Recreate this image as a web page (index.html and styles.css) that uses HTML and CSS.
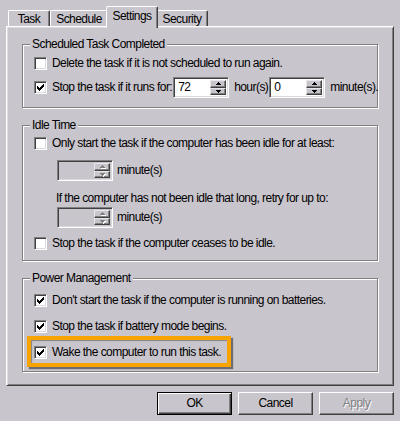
FILE: index.html
```html
<!DOCTYPE html>
<html>
<head>
<meta charset="utf-8">
<title>Task Settings</title>
<link rel="stylesheet" href="styles.css">
</head>
<body>
<div class="dlg">
  <div class="tabs">
    <div class="tab t-task">Task</div>
    <div class="tab t-sched">Schedule</div>
    <div class="tab t-set sel">Settings</div>
    <div class="tab t-sec">Security</div>
  </div>
  <div class="panel">
    <div class="grp g1">
      <span class="legend">Scheduled Task Completed</span>
      <div class="row r17 first1"><span class="cb"></span><span class="lbl">Delete the task if it is not scheduled to run again.</span></div>
      <div class="row r21 g1r2">
        <span class="cb"><svg class="chk" width="7" height="7" viewBox="0 0 7 7"><path d="M0 2h1v3H0zM1 3h1v3H1zM2 4h1v3H2zM3 3h1v3H3zM4 2h1v3H4zM5 1h1v3H5zM6 0h1v3H6z"/></svg></span>
        <span class="lbl">Stop the task if it runs for:</span>
        <span class="spin s-hours"><span class="val">72</span><span class="sbs"><span class="sb"><svg width="5" height="3" viewBox="0 0 5 3"><path d="M2 0h1v1h1v1h1v1H0V2h1V1h1z"/></svg></span><span class="sb"><svg width="5" height="3" viewBox="0 0 5 3"><path d="M0 0h5v1H4v1H3v1H2V2H1V1H0z"/></svg></span></span></span>
        <span class="unit u-hour">hour(s)</span>
        <span class="spin s-min"><span class="val">0</span><span class="sbs"><span class="sb"><svg width="5" height="3" viewBox="0 0 5 3"><path d="M2 0h1v1h1v1h1v1H0V2h1V1h1z"/></svg></span><span class="sb"><svg width="5" height="3" viewBox="0 0 5 3"><path d="M0 0h5v1H4v1H3v1H2V2H1V1H0z"/></svg></span></span></span>
        <span class="unit u-min">minute(s).</span>
      </div>
    </div>

    <div class="grp g2">
      <span class="legend">Idle Time</span>
      <div class="row r17 first2"><span class="cb"></span><span class="lbl">Only start the task if the computer has been idle for at least:</span></div>
      <div class="row r21 ind sp1">
        <span class="spin dis"><span class="val"></span><span class="sbs"><span class="sb"><svg width="5" height="3" viewBox="0 0 5 3"><path d="M2 0h1v1h1v1h1v1H0V2h1V1h1z"/></svg></span><span class="sb"><svg width="5" height="3" viewBox="0 0 5 3"><path d="M0 0h5v1H4v1H3v1H2V2H1V1H0z"/></svg></span></span></span>
        <span class="unit u-dis">minute(s)</span>
      </div>
      <div class="row r17 ind2 txt">If the computer has not been idle that long, retry for up to:</div>
      <div class="row r21 ind sp2">
        <span class="spin dis"><span class="val"></span><span class="sbs"><span class="sb"><svg width="5" height="3" viewBox="0 0 5 3"><path d="M2 0h1v1h1v1h1v1H0V2h1V1h1z"/></svg></span><span class="sb"><svg width="5" height="3" viewBox="0 0 5 3"><path d="M0 0h5v1H4v1H3v1H2V2H1V1H0z"/></svg></span></span></span>
        <span class="unit u-dis">minute(s)</span>
      </div>
      <div class="row r17 cb4"><span class="cb"></span><span class="lbl">Stop the task if the computer ceases to be idle.</span></div>
    </div>

    <div class="grp g3">
      <span class="legend">Power Management</span>
      <div class="row r17 first3"><span class="cb"><svg class="chk" width="7" height="7" viewBox="0 0 7 7"><path d="M0 2h1v3H0zM1 3h1v3H1zM2 4h1v3H2zM3 3h1v3H3zM4 2h1v3H4zM5 1h1v3H5zM6 0h1v3H6z"/></svg></span><span class="lbl">Don't start the task if the computer is running on batteries.</span></div>
      <div class="row r17 next3"><span class="cb"><svg class="chk" width="7" height="7" viewBox="0 0 7 7"><path d="M0 2h1v3H0zM1 3h1v3H1zM2 4h1v3H2zM3 3h1v3H3zM4 2h1v3H4zM5 1h1v3H5zM6 0h1v3H6z"/></svg></span><span class="lbl">Stop the task if battery mode begins.</span></div>
      <div class="row r17 next3"><span class="cb"><svg class="chk" width="7" height="7" viewBox="0 0 7 7"><path d="M0 2h1v3H0zM1 3h1v3H1zM2 4h1v3H2zM3 3h1v3H3zM4 2h1v3H4zM5 1h1v3H5zM6 0h1v3H6z"/></svg></span><span class="lbl">Wake the computer to run this task.</span></div>
      <div class="highlight"></div>
    </div>
  </div>
  <div class="buttons">
    <div class="btn def">OK</div>
    <div class="btn">Cancel</div>
    <div class="btn disabled">Apply</div>
  </div>
</div>
</body>
</html>
```

FILE: styles.css
```css
:root {
  --face: #c9c5cc;
  --hl: #ffffff;
  --sh: #808080;
  --dk: #404040;
}
* { box-sizing: border-box; }
html, body { margin: 0; padding: 0; }
body {
  background: #ffffff;
  width: 400px;
  height: 424px;
  overflow: hidden;
  font-family: "Liberation Sans", Arial, sans-serif;
  font-size: 12px;
  letter-spacing: -0.55px;
  color: #000;
}
.dlg {
  background: var(--face);
  height: 421px;
  display: flex;
  flex-direction: column;
}

/* Tabs */
.tabs {
  height: 26px;
  display: flex;
  align-items: flex-end;
  padding-left: 8px;
}
.tab {
  height: 16px;
  background: var(--face);
  border-top: 1px solid var(--hl);
  border-left: 1px solid var(--hl);
  border-right: 1px solid var(--dk);
  box-shadow: inset -1px 0 var(--sh);
  border-radius: 2px 2px 0 0;
  display: flex;
  align-items: center;
  justify-content: center;
  line-height: 13px;
  padding-top: 1px;
}
.t-task { width: 42px; }
.t-sched { width: 58px; }
.t-set { width: 52px; }
.t-sec { width: 52px; }
.tab.sel {
  height: 22px;
  margin: 0 -2px -2px -2px;
  position: relative;
  z-index: 2;
  padding-top: 0;
  padding-bottom: 3px;
}

/* Panel */
.panel {
  margin-left: 6px;
  width: 388px;
  height: 360px;
  border: 1px solid;
  border-color: var(--hl) var(--dk) var(--dk) var(--hl);
  box-shadow: inset 1px 1px #dedbe0, inset -1px -1px var(--sh);
  padding: 17px 0 0 15px;
}

/* Group boxes */
.grp {
  position: relative;
  width: 356px;
  border: 1px solid var(--sh);
  box-shadow: inset 1px 1px var(--hl), 1px 1px 0 var(--hl);
  padding-left: 11px;
}
.g1 { height: 64px; padding-top: 10px; }
.g2 { height: 136px; margin-top: 17px; padding-top: 9px; }
.g3 { height: 94px; margin-top: 17px; padding-top: 13px; }
.legend {
  position: absolute;
  left: 7px;
  top: -7px;
  line-height: 13px;
  padding: 0 2px 0 2px;
  background: var(--face);
  white-space: nowrap;
}

.row {
  display: flex;
  align-items: center;
  white-space: nowrap;
}
.r17 { height: 17px; }
.r21 { height: 21px; }
.g1r2 { margin-top: 5px; }
.sp1 { margin-top: 8px; }
.txt { margin-top: 8px; }
.sp2 { margin-top: 1px; }
.cb4 { margin-top: 7px; }
.next3 { margin-top: 9px; }
.ind { padding-left: 23px; }
.ind2 { padding-left: 22px; }

/* Checkbox */
.cb {
  width: 13px;
  height: 13px;
  flex: none;
  background: #fff;
  border: 1px solid;
  border-color: var(--sh) var(--hl) var(--hl) var(--sh);
  box-shadow: inset 1px 1px var(--dk), inset -1px -1px #dcd9de;
  position: relative;
}
.chk {
  display: block;
  position: absolute;
  left: 2px;
  top: 2px;
  shape-rendering: crispEdges;
}
.lbl { margin-left: 5px; line-height: 13px; }

/* Spinner */
.spin {
  width: 56px;
  height: 21px;
  flex: none;
  display: flex;
  background: #fff;
  border: 1px solid;
  border-color: var(--sh) var(--hl) var(--hl) var(--sh);
  box-shadow: inset 1px 1px var(--dk), inset -1px -1px #dcd9de;
  padding: 2px 2px 2px 2px;
}
.spin.dis { background: var(--face); }
.s-hours { margin-left: 1px; }
.s-min { margin-left: 1px; }
.val {
  flex: 1;
  line-height: 15px;
  padding-left: 2px;
}
.sbs {
  width: 16px;
  display: flex;
  flex-direction: column;
}
.sb {
  flex: 1;
  background: var(--face);
  border: 1px solid;
  border-color: #e8e6ea var(--dk) var(--dk) #e8e6ea;
  box-shadow: inset -1px -1px var(--sh);
  display: flex;
  align-items: center;
  justify-content: center;
}
.sb svg { display: block; fill: #000; shape-rendering: crispEdges; }
.dis .sb svg { fill: var(--sh); filter: drop-shadow(1px 1px 0 #fff); }
.unit { line-height: 13px; }
.u-hour { margin-left: 5px; }
.u-min { margin-left: 5px; }
.u-dis { margin-left: 4px; }

/* Highlight frame */
.highlight {
  position: absolute;
  left: 4px;
  top: 57px;
  width: 204px;
  height: 31px;
  border: 4px solid #f7a400;
  box-shadow: 2px 2px 1px rgba(0, 0, 0, 0.45), inset 1px 1px 1px rgba(0, 0, 0, 0.35);
}

/* Buttons */
.buttons {
  display: flex;
  justify-content: flex-end;
  gap: 6px;
  padding-right: 6px;
  margin-top: 6px;
}
.btn {
  width: 75px;
  height: 23px;
  background: var(--face);
  border: 1px solid;
  border-color: var(--hl) var(--dk) var(--dk) var(--hl);
  box-shadow: inset -1px -1px var(--sh);
  display: flex;
  align-items: center;
  justify-content: center;
  line-height: 13px;
}
.btn.def {
  border: 1px solid #000;
  box-shadow: inset 1px 1px var(--hl), inset -1px -1px var(--dk), inset -2px -2px var(--sh);
}
.btn.disabled {
  color: var(--sh);
  text-shadow: 1px 1px 0 #fff;
}
```
